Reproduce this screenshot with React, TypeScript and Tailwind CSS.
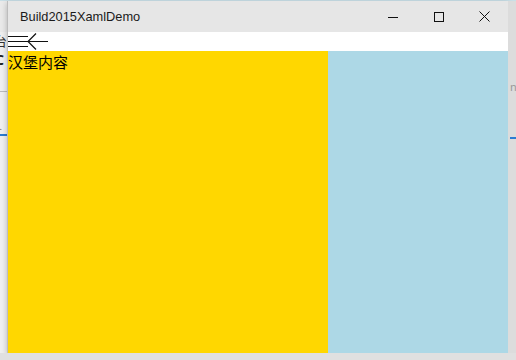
import React from "react";

const font = { fontFamily: '"Noto Sans", "Noto Sans CJK SC", sans-serif' };

function TitleBar() {
  return (
    <div className="flex h-[31px] items-center bg-[#e6e6e6]">
      <span className="ml-[12px] text-[12.8px] text-[#1a1a1a]" style={{ fontFamily: '"Liberation Sans", "Noto Sans", sans-serif' }}>
        Build2015XamlDemo
      </span>
      <div className="ml-auto flex h-full">
        <div className="flex w-[46px] items-center justify-center">
          <svg width="10" height="10" viewBox="0 0 10 10">
            <path d="M0 5.5h10" stroke="#111" strokeWidth="1" />
          </svg>
        </div>
        <div className="flex w-[46px] items-center justify-center">
          <svg width="10" height="10" viewBox="0 0 10 10">
            <rect x="0.5" y="0.5" width="9" height="9" fill="none" stroke="#111" strokeWidth="1" />
          </svg>
        </div>
        <div className="flex w-[46px] items-center justify-center pr-[2px]">
          <svg width="11" height="11" viewBox="0 0 11 11">
            <path d="M0.5 0.5l10 10M10.5 0.5l-10 10" stroke="#111" strokeWidth="1" />
          </svg>
        </div>
      </div>
    </div>
  );
}

function CommandRow() {
  return (
    <div className="flex h-[19px] items-center bg-white">
      <svg width="40" height="19" viewBox="0 0 40 19">
        <path d="M0 4.5h20M0 9.5h20M0 14.5h20" stroke="#111" strokeWidth="1" />
        <path d="M20 9.5h20M28 1.5l-8 8 8 8" stroke="#111" strokeWidth="1.2" fill="none" />
      </svg>
    </div>
  );
}

export default function App() {
  return (
    <div className="flex h-[360px] w-[516px] flex-col overflow-hidden bg-[#e4e4e4]" style={font}>
      <div className="h-[1px] bg-[#c9dfe7]" />
      <div className="flex h-[352px]">
        <div className="flex w-[7px] flex-col overflow-hidden bg-[#f0f0f0]">
          <div className="h-[31px] bg-[#eaeaea]" />
          <div className="-ml-[6px] text-[13px] leading-[19px] text-[#333]">台</div>
          <div className="-ml-[5px] mt-[2px] text-[14px] font-bold leading-[14px] text-[#222]">C</div>
          <div className="mt-[24px] h-[1px] bg-[#bbb]" />
          <div className="-ml-[3px] mt-[30px] text-[9px] leading-[9px] text-[#555]">:.</div>
          <div className="mt-[3px] h-[2px] bg-[#2b7cd3]" />
        </div>
        <div className="flex w-[501px] flex-col border-l border-[#bdbdbd] bg-white shadow-[0_2px_6px_rgba(0,0,0,0.25)]">
          <TitleBar />
          <CommandRow />
          <div className="flex flex-1">
            <div className="w-[320px] bg-[#ffd700]">
              <div className="mt-[2px] text-[15px] leading-[18px] text-black" style={{ fontFamily: '"Noto Sans CJK SC", sans-serif' }}>
                汉堡内容
              </div>
            </div>
            <div className="flex-1 bg-[#add8e6]" />
          </div>
        </div>
        <div className="flex w-[8px] flex-col overflow-hidden bg-[#dcdcdc]">
          <div className="h-[80px]" />
          <div className="ml-[2px] text-[11px] leading-[12px] text-[#999]">n</div>
          <div className="mt-[44px] ml-[2px] h-[2px] bg-[#2b7cd3]" />
        </div>
      </div>
      <div className="flex-1 bg-[#e0e0e0]" />
    </div>
  );
}
